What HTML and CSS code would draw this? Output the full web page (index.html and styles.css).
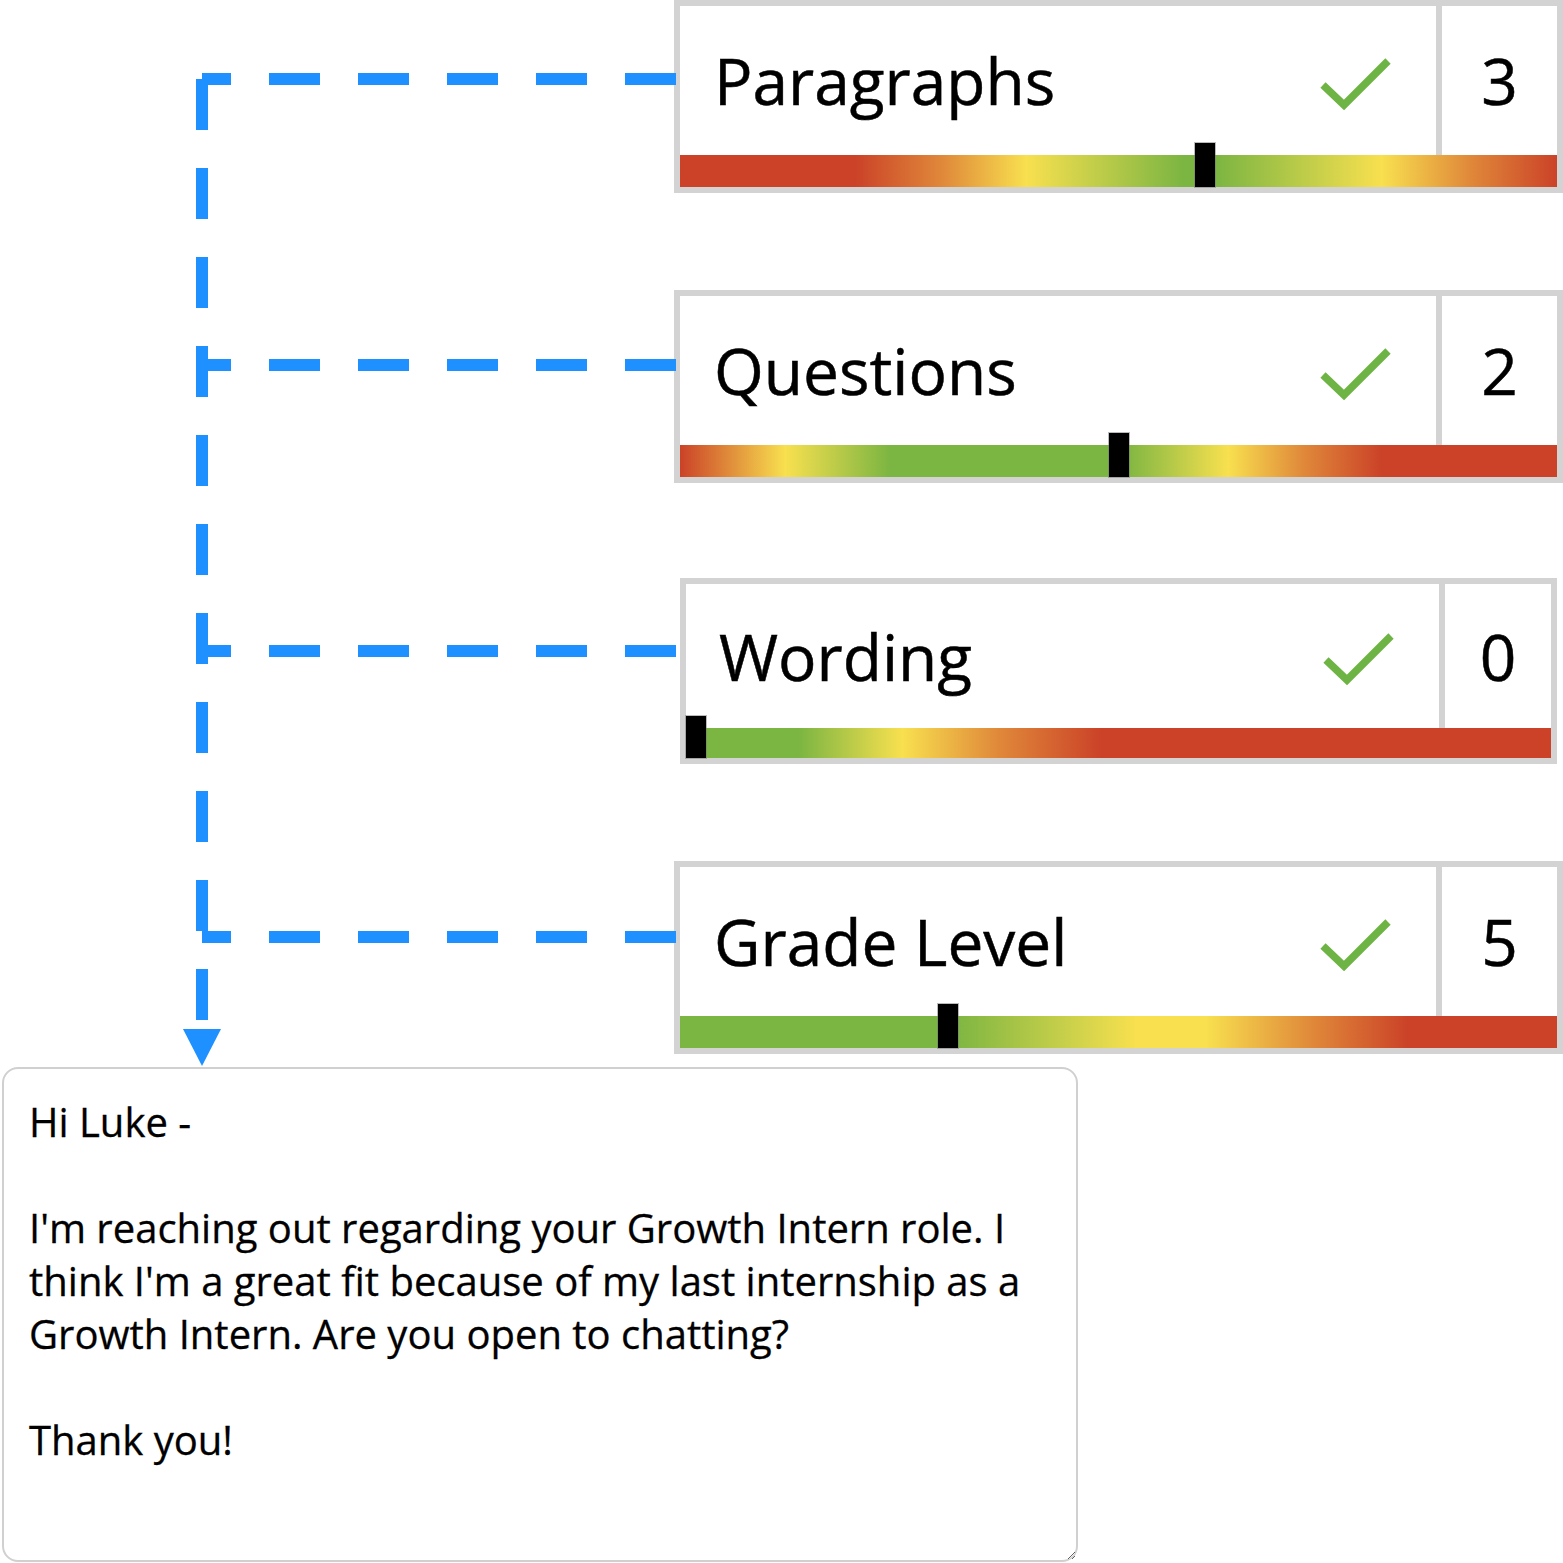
FILE: index.html
```html
<!DOCTYPE html>
<html lang="en">
<head>
<meta charset="utf-8">
<title>Message checks</title>
<link rel="stylesheet" href="styles.css">
</head>
<body>
<div class="page">
  <div class="cards">
    <div class="card">
      <div class="card-top">
        <div class="label">
          <span class="label-text">Paragraphs</span>
          <svg class="check" width="72" height="54" viewBox="0 0 72 54"><polyline points="3,29 24,49 68,5"/></svg>
        </div>
        <div class="count">3</div>
      </div>
      <div class="bar bar-paragraphs"><span class="marker" style="left: calc(59.9% - 10px)"></span></div>
    </div>

    <div class="card card-gap">
      <div class="card-top">
        <div class="label">
          <span class="label-text">Questions</span>
          <svg class="check" width="72" height="54" viewBox="0 0 72 54"><polyline points="3,29 24,49 68,5"/></svg>
        </div>
        <div class="count">2</div>
      </div>
      <div class="bar bar-questions"><span class="marker" style="left: calc(50% - 10px)"></span></div>
    </div>

    <div class="card card-compact">
      <div class="card-top">
        <div class="label">
          <span class="label-text">Wording</span>
          <svg class="check" width="72" height="54" viewBox="0 0 72 54"><polyline points="3,29 24,49 68,5"/></svg>
        </div>
        <div class="count">0</div>
      </div>
      <div class="bar bar-wording"><span class="marker" style="left: 0"></span></div>
    </div>

    <div class="card card-gap">
      <div class="card-top">
        <div class="label">
          <span class="label-text">Grade Level</span>
          <svg class="check" width="72" height="54" viewBox="0 0 72 54"><polyline points="3,29 24,49 68,5"/></svg>
        </div>
        <div class="count">5</div>
      </div>
      <div class="bar bar-grade"><span class="marker" style="left: calc(30.6% - 10px)"></span></div>
    </div>
  </div>

  <textarea class="message" spellcheck="false">Hi Luke -

I'm reaching out regarding your Growth Intern role. I think I'm a great fit because of my last internship as a Growth Intern. Are you open to chatting?

Thank you!</textarea>

  <svg class="connectors" width="1563" height="1563" viewBox="0 0 1563 1563">
    <g class="dash">
      <path d="M676 79H202"/>
      <path d="M676 365H202"/>
      <path d="M676 651H202"/>
      <path d="M676 937H202"/>
      <path d="M202 79V1020"/>
    </g>
    <path class="arrow" d="M183 1029H221L202 1066Z"/>
  </svg>
</div>
</body>
</html>
```
FILE: styles.css
```css
html, body {
  margin: 0;
  padding: 0;
  background: #ffffff;
  overflow: hidden;
}

body {
  font-family: "Open Sans", "Noto Sans", sans-serif;
  color: #000;
}

.page {
  position: relative;
  width: 1563px;
  height: 1563px;
}

.cards {
  margin-left: 674px;
  width: 889px;
  display: flex;
  flex-direction: column;
}

.card {
  box-sizing: border-box;
  width: 889px;
  border: 6px solid #d3d3d3;
  background: #fff;
}

.card-gap {
  margin-top: 97px;
}

.card-compact {
  width: 877px;
  margin-left: 6px;
  margin-top: 95px;
}

.card-top {
  display: flex;
  height: 149px;
}

.card-compact .card-top {
  height: 144px;
}

.label {
  flex: 1;
  display: flex;
  align-items: center;
  justify-content: space-between;
  padding: 0 44px 0 34px;
}

.card-compact .label {
  padding-left: 33px;
}

.label-text {
  font-size: 64px;
  line-height: normal;
  color: #000;
  -webkit-text-stroke: 0.5px #000;
}

.check {
  margin-top: 4px;
}

.check polyline {
  fill: none;
  stroke: #6db444;
  stroke-width: 7.5;
  stroke-linecap: butt;
  stroke-linejoin: miter;
}

.count {
  width: 115px;
  flex: none;
  border-left: 6px solid #d3d3d3;
  display: flex;
  align-items: center;
  justify-content: center;
  font-size: 64px;
  color: #000;
  -webkit-text-stroke: 0.5px #000;
}

.card-compact .count {
  width: 106px;
}

.bar {
  position: relative;
  height: 32px;
}

.card-compact .bar {
  height: 30px;
}

.marker {
  position: absolute;
  bottom: 0;
  width: 20px;
  height: 44px;
  background: #000;
  box-shadow: 0 0 0 1px rgba(120, 120, 120, 0.5);
}

.card-compact .marker {
  height: 42px;
}

.bar-paragraphs {
  background: linear-gradient(90deg,
    #cb4228 0%, #cb4228 20%, #e0893a 30%, #f8e04f 39.5%,
    #7bb542 57.5%, #7bb542 61%, #f8e04f 80%, #e0893a 90%, #cb4228 100%);
}

.bar-questions {
  background: linear-gradient(90deg,
    #cb4228 0%, #f8e04f 12%, #7bb542 24%, #7bb542 50.5%,
    #f8e04f 62.5%, #e0893a 71%, #cb4228 80%, #cb4228 100%);
}

.bar-wording {
  background: linear-gradient(90deg,
    #7bb542 0%, #7bb542 13%, #f8e04f 25%, #e0893a 36%, #cb4228 48%, #cb4228 100%);
}

.bar-grade {
  background: linear-gradient(90deg,
    #7bb542 0%, #7bb542 31%, #f8e04f 52%, #f8e04f 60%,
    #e0893a 72%, #cb4228 83%, #cb4228 100%);
}

.message {
  display: block;
  box-sizing: border-box;
  margin: 13px 0 0 2px;
  width: 1076px;
  height: 495px;
  padding: 26px 24px 0 25px;
  border: 2px solid #d0d0d0;
  border-radius: 16px;
  font-family: "Open Sans", "Noto Sans", sans-serif;
  font-size: 40px;
  line-height: 53px;
  color: #000;
  background: #fff;
  outline: none;
  overflow: hidden;
  -webkit-text-stroke: 0.3px #000;
}

.connectors {
  position: absolute;
  left: 0;
  top: 0;
  pointer-events: none;
}

.dash path {
  fill: none;
  stroke: #1e90ff;
  stroke-width: 12;
  stroke-dasharray: 51 38;
}

.arrow {
  fill: #1e90ff;
}
```
